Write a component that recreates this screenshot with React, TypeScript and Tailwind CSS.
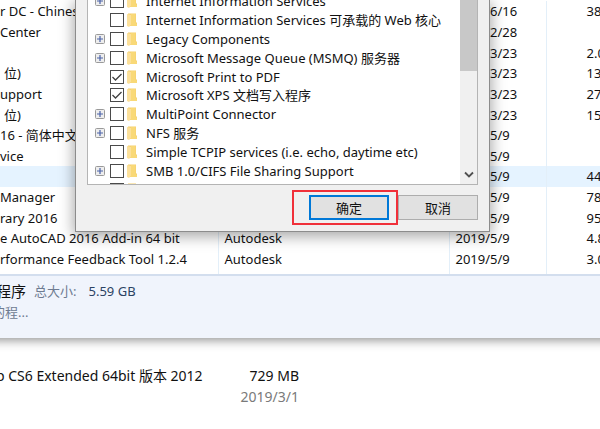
import { useState } from 'react'
import clsx from 'clsx'

type Program = {
  name: string
  publisher?: string
  date: string
  size?: string
  indent?: boolean
  selected?: boolean
}

const programs: Program[] = [
  { name: 'r DC - Chinese', date: '2018/6/16', size: '38' },
  { name: 'Center', date: '2018/2/28' },
  { name: '', date: '2018/3/23', size: '2.0' },
  { name: '位)', date: '2018/3/23', size: '13', indent: true },
  { name: 'upport', date: '2018/3/23', size: '27' },
  { name: '位)', date: '2018/3/23', size: '15', indent: true },
  { name: '16 - 简体中文', date: '2019/5/9' },
  { name: 'vice', date: '2019/5/9' },
  { name: '', date: '2019/5/9', size: '44', selected: true },
  { name: 'Manager', date: '2019/5/9', size: '78' },
  { name: 'rary 2016', date: '2019/5/9', size: '95' },
  { name: 'e AutoCAD 2016 Add-in 64 bit', publisher: 'Autodesk', date: '2019/5/9', size: '4.8' },
  { name: 'rformance Feedback Tool 1.2.4', publisher: 'Autodesk', date: '2019/5/9', size: '3.0' },
  { name: '', publisher: 'Autodesk', date: '' },
]

const initialFeatures = [
  { name: 'Internet Information Services', expandable: true, checked: false },
  { name: 'Internet Information Services 可承载的 Web 核心', expandable: false, checked: false },
  { name: 'Legacy Components', expandable: true, checked: false },
  { name: 'Microsoft Message Queue (MSMQ) 服务器', expandable: true, checked: false },
  { name: 'Microsoft Print to PDF', expandable: false, checked: true },
  { name: 'Microsoft XPS 文档写入程序', expandable: false, checked: true },
  { name: 'MultiPoint Connector', expandable: true, checked: false },
  { name: 'NFS 服务', expandable: true, checked: false },
  { name: 'Simple TCPIP services (i.e. echo, daytime etc)', expandable: false, checked: false },
  { name: 'SMB 1.0/CIFS File Sharing Support', expandable: true, checked: false },
  { name: '', expandable: false, checked: false },
]

function FolderIcon() {
  return (
    <svg viewBox="0 0 10 14" className="h-[14px] w-[10px] shrink-0" aria-hidden="true">
      <path d="M1 0.500h8V9l1 1v3H1z" fill="#f5cf6c" />
      <path d="M0 1l4 1v10l-2 2-2-1z" fill="#fce09a" />
      <path d="M4 1h4.500v8.500L10 11v2H4z" fill="#f9d978" />
    </svg>
  )
}

function ExpandIcon() {
  return (
    <svg viewBox="0 0 10 10" className="h-[10px] w-[10px]" aria-hidden="true">
      <rect x="0.500" y="0.500" width="9" height="9" rx="1" fill="#eeeeee" stroke="#9a9a9a" />
      <path d="M5 2v6M2 5h6" stroke="#4a62a8" strokeWidth="1.200" />
    </svg>
  )
}

function FeatureTree() {
  const [features, setFeatures] = useState(initialFeatures)

  const toggle = (index: number) => {
    setFeatures(features.map((f, i) => (i === index ? { ...f, checked: !f.checked } : f)))
  }

  return (
    <ul className="-mt-2 grid h-[207px] flex-1 auto-rows-fr pl-[7px]">
      {features.map((feature, i) => (
        <li key={i} className="flex min-h-0 items-center">
          <span className="w-[15px] shrink-0">
            {feature.expandable && (
              <button className="block" aria-label={`展开 ${feature.name}`}>
                <ExpandIcon />
              </button>
            )}
          </span>
          <label className="flex items-center whitespace-nowrap">
            <span className="grid h-[14px] w-[14px] shrink-0">
              <input
                type="checkbox"
                checked={feature.checked}
                onChange={() => toggle(i)}
                className="col-start-1 row-start-1 h-[14px] w-[14px] appearance-none border border-[#4a4a4a] bg-white"
              />
              {feature.checked && (
                <svg viewBox="0 0 14 14" className="pointer-events-none col-start-1 row-start-1" aria-hidden="true">
                  <path d="M2.500 7l3 3 6-6" fill="none" stroke="#404040" strokeWidth="1.300" />
                </svg>
              )}
            </span>
            <span className="mr-[9px] ml-[3px]">
              <FolderIcon />
            </span>
            {feature.name}
          </label>
        </li>
      ))}
    </ul>
  )
}

function FeaturesDialog() {
  return (
    <div
      role="dialog"
      aria-label="Windows 功能"
      className="absolute top-0 left-[75px] w-[415px] border border-t-0 border-[#8c8c8c] bg-[#f0f0f0] px-[11px] pb-[11px] shadow-[0_3px_14px_1px_rgba(0,0,0,0.36)]"
    >
      <div className="flex h-[185px] overflow-hidden border border-t-0 border-[#b4b4b4] bg-white">
        <FeatureTree />
        <div className="flex w-[17px] flex-col justify-between bg-[#f0f0f0]">
          <div className="h-[71px] bg-[#c8c8c8]" />
          <button className="flex h-[18px] items-center justify-center" aria-label="向下滚动">
            <svg viewBox="0 0 10 8" className="h-2 w-[10px]" aria-hidden="true">
              <path d="M1 1.500l4 4 4-4" fill="none" stroke="#505050" strokeWidth="1.800" />
            </svg>
          </button>
        </div>
      </div>
      <div className="mt-[10px] flex justify-end gap-[9px]">
        <div className="relative">
          <button className="block h-[25px] w-[80px] border-2 border-[#0078d7] bg-[#e1e1e1]">确定</button>
          <span className="pointer-events-none absolute -top-[5px] -right-[9px] -bottom-[5px] -left-[17px] border-2 border-[#f0303a]" />
        </div>
        <button className="block h-[25px] w-[80px] border border-[#adadad] bg-[#e1e1e1]">取消</button>
      </div>
    </div>
  )
}

function ProgramTable() {
  return (
    <div className="h-[274px] overflow-hidden bg-white pt-[1px]">
      <table className="h-[289px] w-full table-fixed border-collapse whitespace-nowrap">
        <colgroup>
          <col className="w-[218px]" />
          <col className="w-[231px]" />
          <col className="w-[97px]" />
          <col />
        </colgroup>
        <tbody>
          {programs.map((program, i) => (
            <tr key={i} className={clsx(program.selected && 'bg-[#e5f3ff]')}>
              <td className={clsx('border-r border-[#e3eff9] p-0', program.indent && 'pl-1')}>{program.name}</td>
              <td className="border-r border-[#e3eff9] p-0 pl-[6px]">{program.publisher}</td>
              <td className="border-r border-[#e3eff9] p-0 pl-[6px]">{program.date}</td>
              <td className="p-0 pl-10">{program.size}</td>
            </tr>
          ))}
        </tbody>
      </table>
    </div>
  )
}

function DetailsPane() {
  return (
    <footer className="h-[64px] border-t-2 border-[#d3deee] bg-[#f0f4fc] pt-[4px] whitespace-nowrap">
      <div className="-ml-1 flex h-[22px] items-center">
        <span className="text-[15px]">程序</span>
        <span className="ml-[8px] text-[#6e7b91]">总大小:</span>
        <span className="ml-[12px] text-[#2b4363]">5.59 GB</span>
      </div>
      <p className="-ml-2 flex h-[20px] items-center text-[#6e7b91]">的程...</p>
    </footer>
  )
}

function AppItem({ name, size, date }: { name: string; size: string; date: string }) {
  return (
    <li className="flex h-[65px] w-[303px] justify-between leading-[21px] whitespace-nowrap">
      <span>{name}</span>
      <span className="text-right">
        <span className="block h-[21px]">{size}</span>
        <span className="block text-[#7a7a7a]">{date}</span>
      </span>
    </li>
  )
}

export default function App() {
  return (
    <main className="relative min-h-screen overflow-hidden bg-white font-['Noto_Sans','Noto_Sans_CJK_SC',sans-serif] text-[13px] leading-[18px] text-[#111111]">
      {/* apps list that lies behind the programs window */}
      <ul className="-ml-1 pt-[300px] text-[14px]">
        <AppItem name="" size="" date="2019/3/1" />
        <AppItem name="p CS6 Extended 64bit 版本 2012" size="729 MB" date="2019/3/1" />
      </ul>

      {/* the window is wider than the screen, so its side edges stay out of view */}
      <section className="absolute -inset-x-5 top-0 px-5 shadow-[0_1px_10px_1px_rgba(0,0,0,0.45)]">
        <div className="relative -mx-5 bg-[#f0f4fc] px-5">
          <ProgramTable />
          <DetailsPane />
        </div>
        <div className="absolute top-0 left-5">
          <FeaturesDialog />
        </div>
      </section>
    </main>
  )
}
